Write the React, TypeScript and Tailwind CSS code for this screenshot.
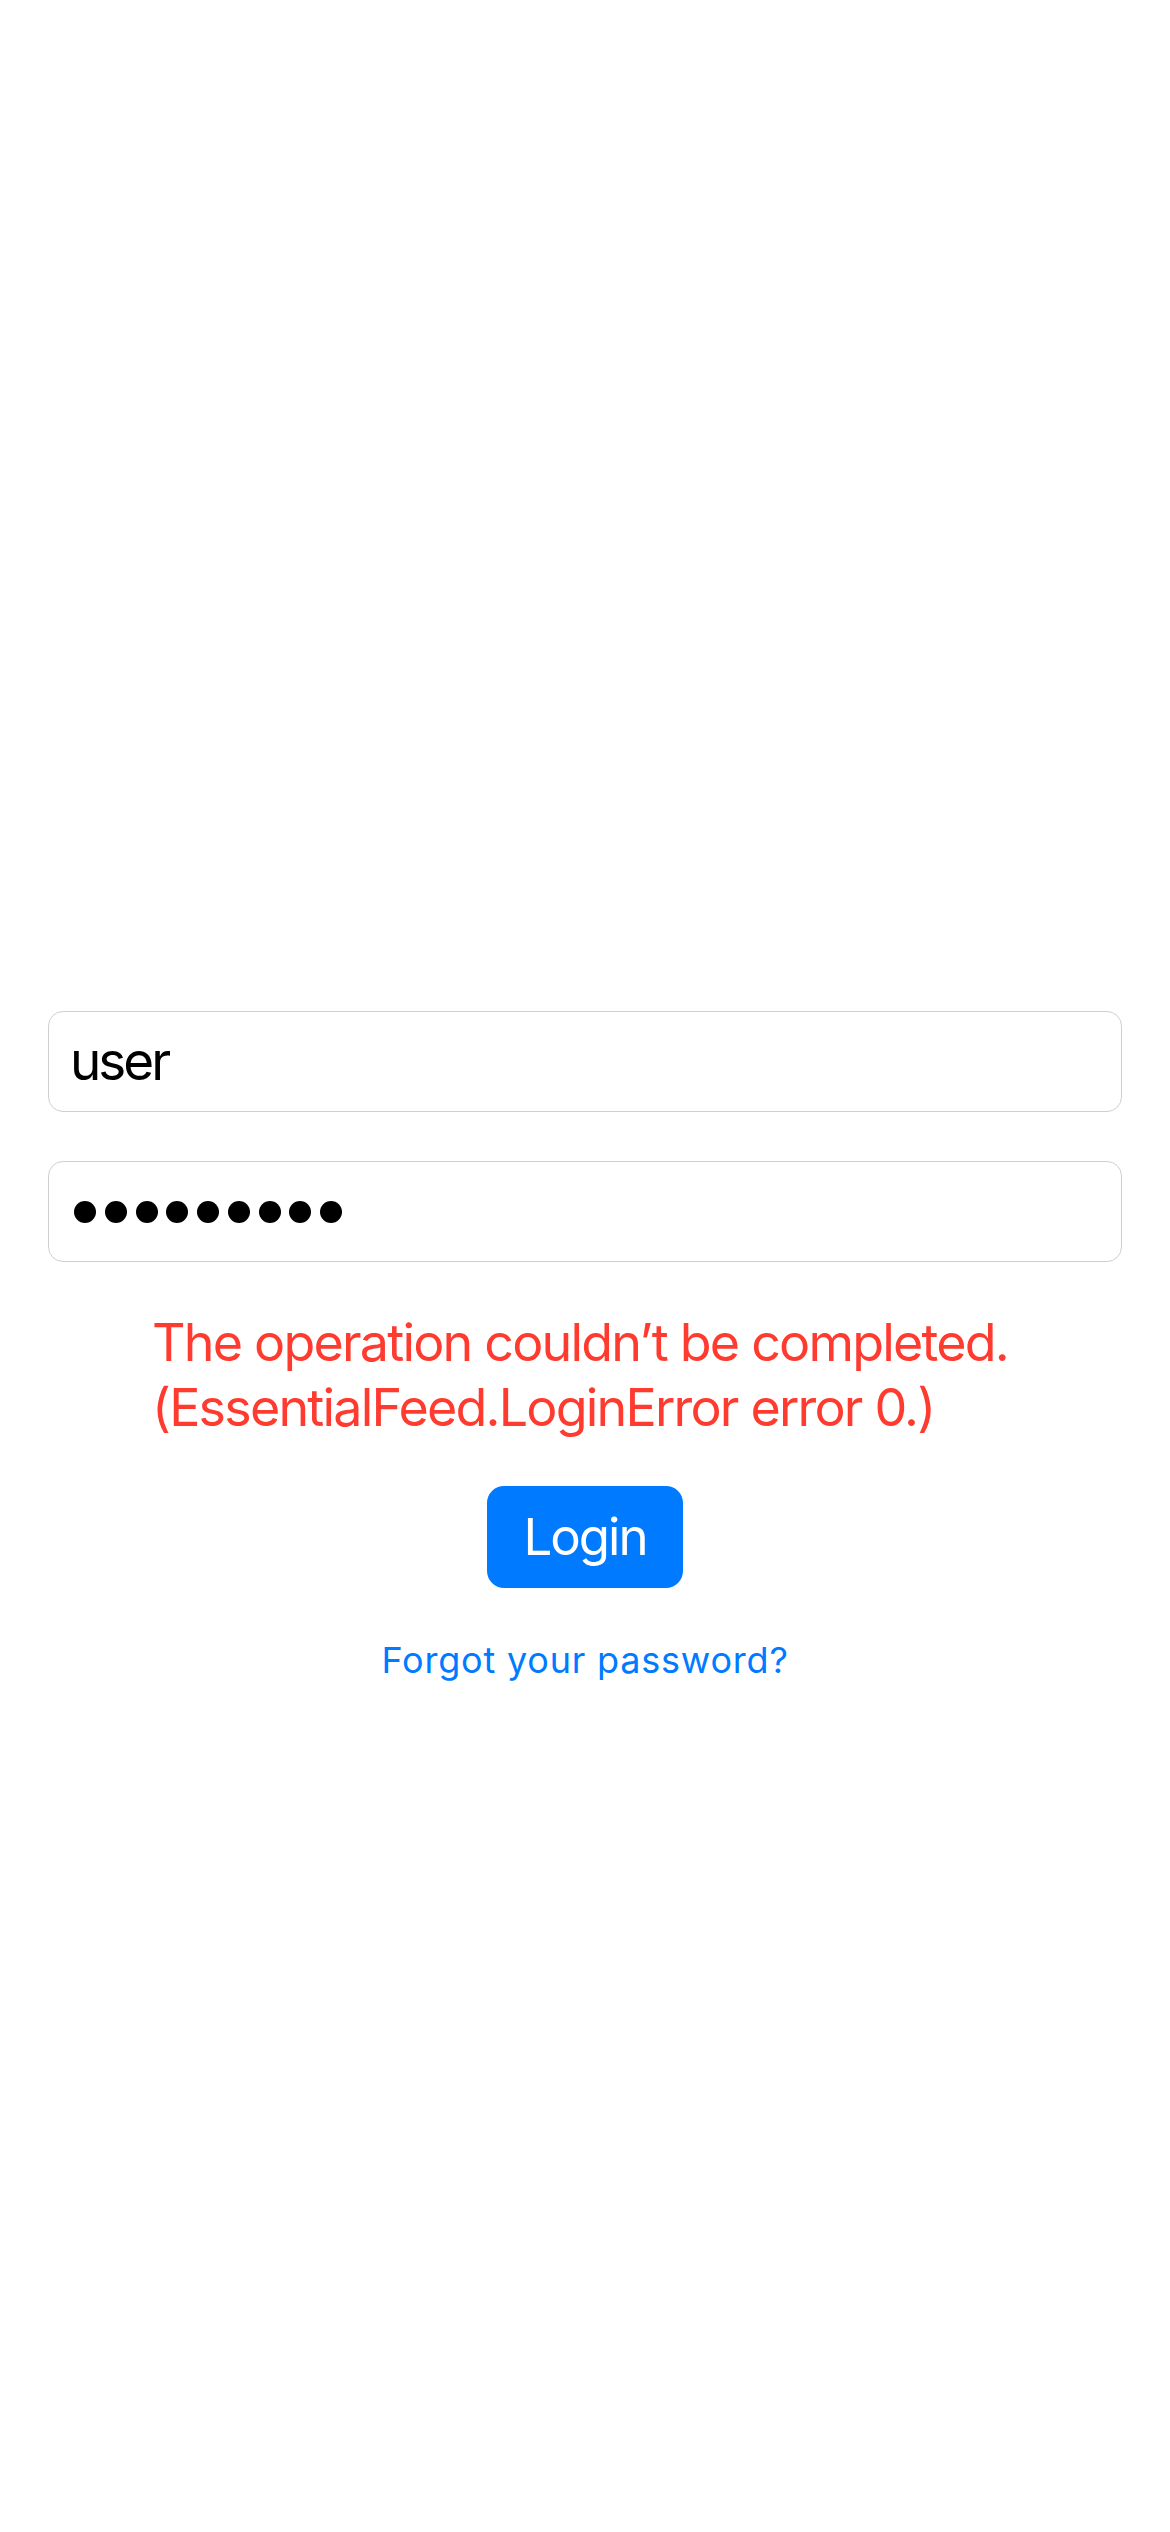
import React from "react";

export default function App() {
  const font = { fontFamily: "Inter, 'Noto Sans', sans-serif" };
  return (
    <div className="w-[1170px] h-[2532px] bg-white flex flex-col" style={font}>
      <div className="flex flex-col px-[48px] pt-[1011px]">
        <div className="h-[101px] border border-[#cfcfcf] rounded-[15px] flex items-center pl-[21px] text-[53px] tracking-[-3px] text-black">
          user
        </div>
        <div className="mt-[49px] h-[101px] border border-[#cfcfcf] rounded-[15px] flex items-center pl-[25px] gap-[8.75px]">
          {Array.from({ length: 9 }).map((_, i) => (
            <div key={i} className="w-[22px] h-[22px] rounded-full bg-black" />
          ))}
        </div>
      </div>
      <div className="mt-[48px] pl-[152px] text-[52px] leading-[65px] tracking-[-1.8px] text-[#ff3b30]">
        <div>The operation couldn’t be completed.</div>
        <div>(EssentialFeed.LoginError error 0.)</div>
      </div>
      <div className="mt-[46px] flex justify-center">
        <div className="w-[196px] h-[102px] rounded-[17px] bg-[#007aff] text-white text-[51px] tracking-[-2px] flex items-center justify-center">
          Login
        </div>
      </div>
      <div className="mt-[50px] flex justify-center text-[36px] leading-[44px] tracking-[0.8px] text-[#007aff]">
        Forgot your password?
      </div>
    </div>
  );
}
